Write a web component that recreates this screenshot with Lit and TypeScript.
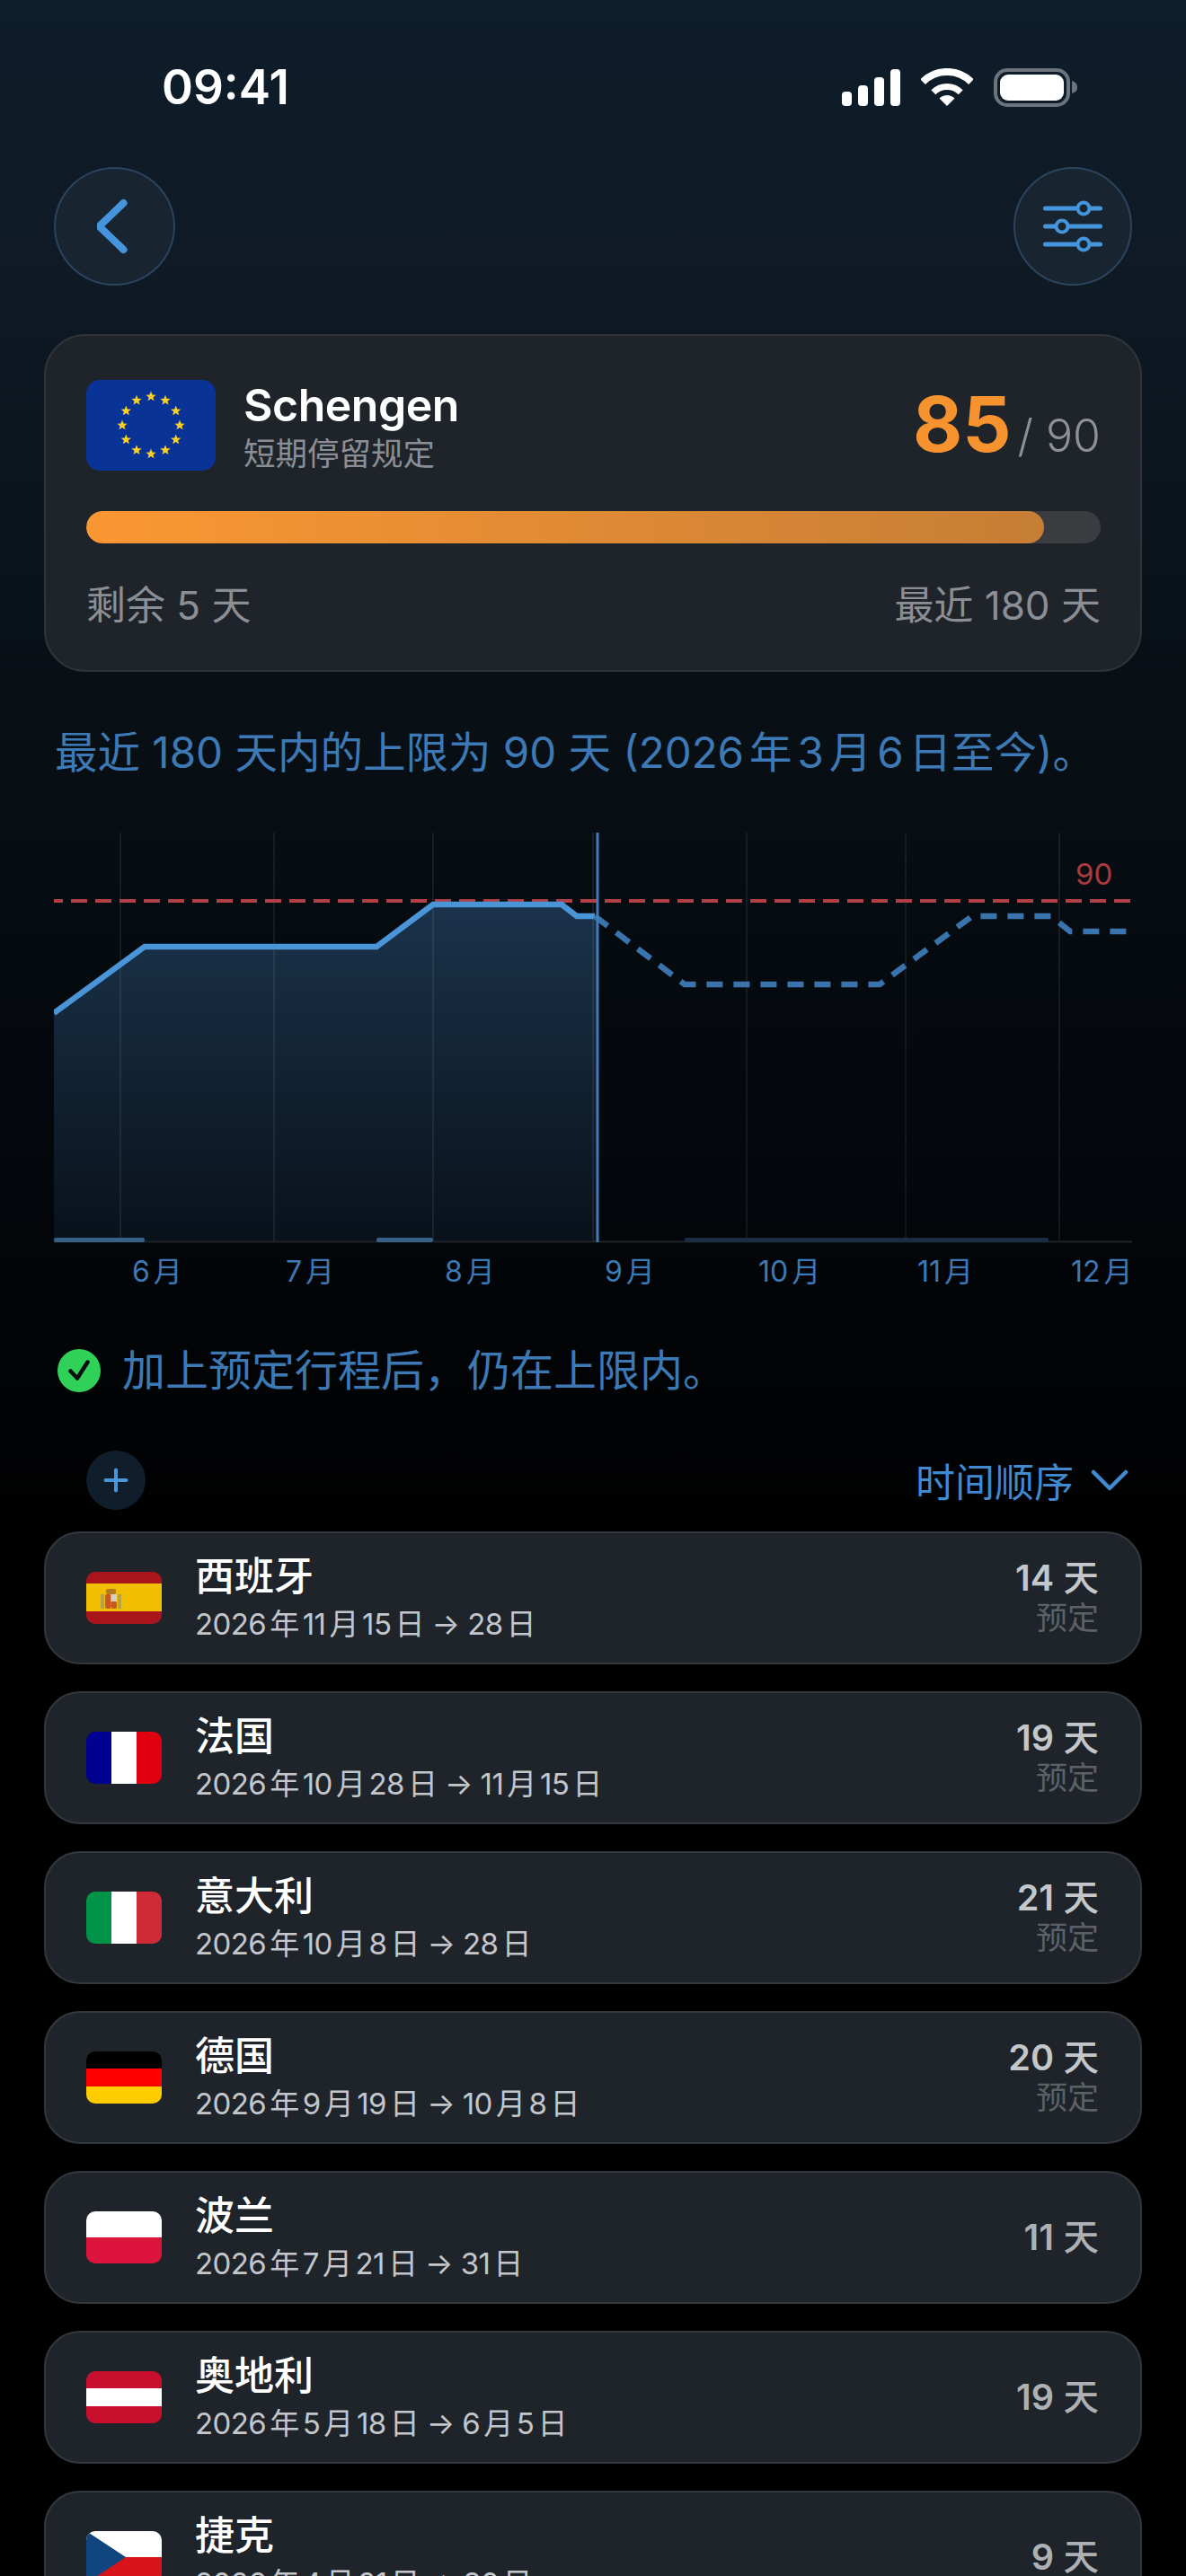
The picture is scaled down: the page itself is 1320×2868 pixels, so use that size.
import { LitElement, html, css, svg } from "lit";
import { customElement } from "lit/decorators.js";

interface Trip { name: string; flag: string; dates: string; days: number; planned: boolean; }

const TRIPS: Trip[] = [
  { name: "西班牙", flag: "es", dates: "2026年11月15日 → 28日", days: 14, planned: true },
  { name: "法国", flag: "fr", dates: "2026年10月28日 → 11月15日", days: 19, planned: true },
  { name: "意大利", flag: "it", dates: "2026年10月8日 → 28日", days: 21, planned: true },
  { name: "德国", flag: "de", dates: "2026年9月19日 → 10月8日", days: 20, planned: true },
  { name: "波兰", flag: "pl", dates: "2026年7月21日 → 31日", days: 11, planned: false },
  { name: "奥地利", flag: "at", dates: "2026年5月18日 → 6月5日", days: 19, planned: false },
  { name: "捷克", flag: "cz", dates: "2026年4月21日 → 30日", days: 9, planned: false },
];

const MONTHS = ["", "6月", "7月", "8月", "9月", "10月", "11月", "12月"];
const GRID_X = [134, 305, 482, 660, 831, 1008, 1179];

function star(cx: number, cy: number, R: number): string {
  const pts: string[] = [];
  for (let i = 0; i < 10; i++) {
    const r = i % 2 === 0 ? R : R * 0.42;
    const a = (-90 + i * 36) * (Math.PI / 180);
    pts.push(`${(cx + r * Math.cos(a)).toFixed(2)},${(cy + r * Math.sin(a)).toFixed(2)}`);
  }
  return pts.join(" ");
}

function flag(code: string) {
  const body: Record<string, unknown> = {
    es: svg`<rect width="84" height="58" fill="#aa151b"/><rect y="13" width="84" height="31" fill="#f1bf00"/>
      <rect x="16" y="25" width="4" height="16" fill="#b9a04a"/><rect x="35" y="25" width="4" height="16" fill="#b9a04a"/>
      <rect x="21" y="25" width="6.5" height="16" rx="2" fill="#c8581f"/><rect x="27.5" y="25" width="6.5" height="8" fill="#d9cfc0"/>
      <rect x="27.5" y="33" width="6.5" height="8" rx="2" fill="#c8581f"/><rect x="22" y="19" width="11" height="6" rx="2" fill="#b5791f"/>`,
    fr: svg`<rect width="28" height="58" fill="#000091"/><rect x="28" width="28" height="58" fill="#fff"/><rect x="56" width="28" height="58" fill="#e1000f"/>`,
    it: svg`<rect width="28" height="58" fill="#009246"/><rect x="28" width="28" height="58" fill="#fff"/><rect x="56" width="28" height="58" fill="#ce2b37"/>`,
    de: svg`<rect width="84" height="19" fill="#000"/><rect y="19" width="84" height="20" fill="#f00"/><rect y="39" width="84" height="19" fill="#fc0"/>`,
    pl: svg`<rect width="84" height="29" fill="#fff"/><rect y="29" width="84" height="29" fill="#dc143c"/>`,
    at: svg`<rect width="84" height="19" fill="#c8102e"/><rect y="19" width="84" height="20" fill="#fff"/><rect y="39" width="84" height="19" fill="#c8102e"/>`,
    cz: svg`<rect width="84" height="29" fill="#fff"/><rect y="29" width="84" height="29" fill="#d7141a"/><path d="M0 0L44 29L0 58Z" fill="#11457e"/>`,
  };
  return html`<svg class="flag" viewBox="0 0 84 58" aria-hidden="true">${body[code]}</svg>`;
}

@customElement("app-root")
export class AppRoot extends LitElement {
  static styles = css`
    :host {
      display: block;
      width: 1320px;
      height: 2868px;
      overflow: hidden;
      color: #fff;
      font-family: Inter, "Noto Sans CJK SC", sans-serif;
      text-autospace: normal;
      background: linear-gradient(180deg, #0e1d2a 0px, #0f1a25 300px, #080f15 800px, #03060a 1350px, #000 1750px);
    }
    svg { display: block; }
    .status {
      height: 72px;
      padding: 61px 121px 0 180px;
      display: flex;
      justify-content: space-between;
      align-items: center;
    }
    .time { font-size: 53px; font-weight: 600; line-height: 72px; }
    .status-icons { display: flex; align-items: center; gap: 23px; }
    .nav {
      margin-top: 53px;
      padding: 0 60px;
      display: flex;
      justify-content: space-between;
    }
    .round {
      width: 132px;
      height: 132px;
      box-sizing: border-box;
      border-radius: 50%;
      background: #182430;
      border: 2px solid #2b445e;
      display: flex;
      align-items: center;
      justify-content: center;
    }
    .round.back { width: 135px; }
    .card {
      margin: 54px 49px 0 49px;
      height: 376px;
      box-sizing: border-box;
      padding: 49px 44px 0 45px;
      background: #1f242b;
      border: 2px solid #2f3439;
      border-radius: 46px;
    }
    .head { display: flex; align-items: flex-start; height: 101px; }
    .eu { width: 144px; height: 101px; border-radius: 15px; overflow: hidden; flex: none; }
    .titles { margin-left: 31px; flex: 1; }
    .title { font-size: 50px; font-weight: 600; line-height: 56px; letter-spacing: -0.5px; }
    .sub { font-size: 35.5px; line-height: 44px; color: #8b8e94; margin-top: 5px; }
    .count { display: flex; align-items: baseline; margin-top: 6px; }
    .count b { font-size: 85px; font-weight: 700; line-height: 88px; color: #f7932f; }
    .count span { font-size: 50px; font-weight: 300; color: #8e9198; margin-left: 7px; }
    .track { margin-top: 45px; height: 36px; border-radius: 18px; background: #3a3c40; overflow: hidden; }
    .fill { height: 36px; border-radius: 18px; background: linear-gradient(90deg, #fb9733, #c67e35); }
    .labels {
      margin-top: 44px;
      display: flex;
      justify-content: space-between;
      font-size: 44px;
      line-height: 50px;
      color: #8b8e94;
    }
    .note { margin: 60px 0 0 61px; font-size: 47.5px; line-height: 60px; color: #3d7ab5; white-space: nowrap; }
    .chart { margin: 59px 0 0 60px; width: 1200px; height: 460px; }
    .chart .limit { font-size: 33px; fill: #a83a40; font-family: Inter, sans-serif; }
    .months {
      margin-left: 60px;
      width: 1200px;
      display: grid;
      grid-template-columns: 74px 171px 177px 178px 171px 177px 171px 81px;
      margin-top: 7px;
      font-size: 32px;
      line-height: 44px;
      color: #3d7ab5;
    }
    .months span { padding-left: 13px; white-space: nowrap; }
    .ok { margin: 58px 0 0 64px; display: flex; align-items: center; gap: 24px; height: 60px; }
    .ok-text { font-size: 48px; line-height: 60px; color: #3d7ab5; }
    .tools {
      margin-top: 59px;
      padding: 0 64px 0 96px;
      height: 66px;
      display: flex;
      justify-content: space-between;
      align-items: center;
    }
    .plus { width: 66px; height: 66px; border-radius: 50%; background: #101e2c; display: flex; align-items: center; justify-content: center; }
    .sort { display: flex; align-items: center; gap: 19px; font-size: 44px; color: #3f8ad0; }
    .rows { margin: 24px 49px 0 49px; display: flex; flex-direction: column; gap: 30px; }
    .row {
      height: 148px;
      box-sizing: border-box;
      padding: 0 46px 0 45px;
      background: #1f242b;
      border: 2px solid #33383e;
      border-radius: 40px;
      display: flex;
      align-items: center;
      flex: none;
    }
    .flag-wrap { width: 84px; height: 58px; border-radius: 10px; overflow: hidden; flex: none; }
    .flag { width: 84px; height: 58px; }
    .row-main { margin-left: 37px; flex: 1; }
    .name { font-size: 44px; font-weight: 500; line-height: 52px; margin-bottom: 6px; }
    .dates { font-size: 33px; line-height: 42px; color: #c3c6ca; white-space: nowrap; letter-spacing: -0.6px; }
    .row-side { text-align: right; }
    .days { font-size: 39.5px; font-weight: 500; line-height: 44px; color: #aeb1b4; }
    .days b { font-weight: 600; }
    .days.on { color: #c4c7ca; }
    .planned { font-size: 35px; line-height: 44px; color: #5d6167; }
  `;

  render() {
    return html`
      <div class="status">
        <div class="time">09:41</div>
        <div class="status-icons">
          <svg width="65" height="41" viewBox="0 0 65 41" fill="#fff" aria-hidden="true">
            <rect x="0" y="25" width="11" height="16" rx="4"/><rect x="18" y="18" width="11" height="23" rx="4"/>
            <rect x="36" y="9" width="11" height="32" rx="4"/><rect x="54" y="0" width="11" height="41" rx="4"/>
          </svg>
          <svg width="58" height="43" viewBox="0 0 58 43" fill="none" stroke="#fff" aria-hidden="true">
            <path d="M2.1 15.1A38 38 0 0 1 55.9 15.1" stroke-width="8"/>
            <path d="M13.8 26.8A21.5 21.5 0 0 1 44.2 26.8" stroke-width="7"/>
            <path d="M29 42L20.5 33.5A12 12 0 0 1 37.5 33.5Z" fill="#fff" stroke="none"/>
          </svg>
          <svg width="93" height="43" viewBox="0 0 93 43" aria-hidden="true">
            <rect x="2" y="2" width="81" height="39" rx="13" fill="none" stroke="#6b747d" stroke-width="4"/>
            <rect x="7" y="7" width="71" height="29" rx="9" fill="#fff"/>
            <path d="M87 14C91 15 93 18 93 21.5C93 25 91 27 87 28Z" fill="#6b747d"/>
          </svg>
        </div>
      </div>

      <div class="nav">
        <div class="round back">
          <svg width="40" height="64" viewBox="0 0 40 64" fill="none" stroke="#4495dc" stroke-width="8" stroke-linecap="round" stroke-linejoin="round" aria-hidden="true">
            <path d="M29.5 6L2.5 32L29.5 58"/>
          </svg>
        </div>
        <div class="round">
          <svg width="66" height="58" viewBox="0 0 66 58" fill="none" stroke="#4495dc" aria-hidden="true">
            <path d="M2.500 9H63.500M2.500 29H63.500M2.500 49H63.500" stroke-width="5" stroke-linecap="round"/>
            <circle cx="45" cy="9" r="6.500" fill="#182430" stroke-width="4"/>
            <circle cx="21" cy="29" r="6.500" fill="#182430" stroke-width="4"/>
            <circle cx="45" cy="49" r="6.500" fill="#182430" stroke-width="4"/>
          </svg>
        </div>
      </div>

      <section class="card">
        <div class="head">
          <div class="eu">
            <svg width="144" height="101" viewBox="0 0 144 101" aria-hidden="true">
              <rect width="144" height="101" fill="#0a3398"/>
              ${Array.from({ length: 12 }, (_, i) => {
                const a = (i * 30 - 90) * (Math.PI / 180);
                return svg`<polygon points=${star(72 + 32 * Math.cos(a), 50.5 + 32 * Math.sin(a), 6)} fill="#ffd21f"/>`;
              })}
            </svg>
          </div>
          <div class="titles">
            <div class="title">Schengen</div>
            <div class="sub">短期停留规定</div>
          </div>
          <div class="count"><b>85</b><span>/ 90</span></div>
        </div>
        <div class="track"><div class="fill" style="width: ${(85 / 90 * 100).toFixed(2)}%"></div></div>
        <div class="labels"><span>剩余 5 天</span><span>最近 180 天</span></div>
      </section>

      <div class="note">最近 180 天内的上限为 90 天 (2026年3月6日至今)。</div>

      <svg class="chart" viewBox="60 927 1200 460">
        <defs>
          <linearGradient id="area" gradientUnits="userSpaceOnUse" x1="0" y1="1007" x2="0" y2="1383">
            <stop offset="0" stop-color="#1a334b"/><stop offset="1" stop-color="#09111a"/>
          </linearGradient>
        </defs>
        <polygon points="60,1128 161,1054 419,1054 482,1007 625,1007 642,1020 665,1020 665,1383 60,1383" fill="url(#area)"/>
        ${GRID_X.map((x) => svg`<line x1=${x} x2=${x} y1="927" y2="1383" stroke="#fff" stroke-opacity="0.14" stroke-width="1"/>`)}
        <line x1="60" x2="1260" y1="1382.500" y2="1382.500" stroke="#1f2327" stroke-width="2"/>
        <rect x="60" y="1378" width="101" height="5" rx="2" fill="#38618a"/>
        <rect x="419" y="1378" width="63" height="5" rx="2" fill="#38618a"/>
        <rect x="762" y="1378" width="405" height="5" rx="2" fill="#1a2d42"/>
        <line x1="60" x2="1260" y1="1003" y2="1003" stroke="#b13f46" stroke-width="4" stroke-dasharray="18 9" stroke-dashoffset="8"/>
        <polyline points="60,1128 161,1054 419,1054 482,1007 625,1007 642,1020 662,1020" fill="none" stroke="#4a94d8" stroke-width="6.500"/>
        <polyline points="662,1020 762,1096 979,1096 1082,1020 1170,1020 1191,1037 1260,1037" fill="none" stroke="#3a74ad" stroke-width="6.500" stroke-dasharray="18 12"/>
        <line x1="665" x2="665" y1="927" y2="1383" stroke="#3f7dba" stroke-width="3"/>
        <text class="limit" x="1197" y="985">90</text>
      </svg>

      <div class="months">${MONTHS.map((m) => html`<span>${m}</span>`)}</div>

      <div class="ok">
        <svg width="48" height="48" viewBox="0 0 48 48" aria-hidden="true">
          <circle cx="24" cy="24" r="24" fill="#30d158"/>
          <path d="M14.500 24.500L22 32.500L33.500 14.500" fill="none" stroke="#0a0d10" stroke-width="4.500" stroke-linecap="round" stroke-linejoin="round"/>
        </svg>
        <div class="ok-text">加上预定行程后，仍在上限内。</div>
      </div>

      <div class="tools">
        <div class="plus">
          <svg width="28" height="28" viewBox="0 0 28 28" fill="none" stroke="#4a94d8" stroke-width="4" stroke-linecap="round" aria-hidden="true">
            <path d="M14 2.500V25.500M2.500 14H25.500"/>
          </svg>
        </div>
        <div class="sort">
          <span>时间顺序</span>
          <svg width="42" height="24" viewBox="0 0 42 24" fill="none" stroke="#3f8ad0" stroke-width="4.500" stroke-linecap="round" stroke-linejoin="round" aria-hidden="true">
            <path d="M3 3L21 21L39 3"/>
          </svg>
        </div>
      </div>

      <div class="rows">
        ${TRIPS.map((t) => html`
          <div class="row">
            <div class="flag-wrap">${flag(t.flag)}</div>
            <div class="row-main">
              <div class="name">${t.name}</div>
              <div class="dates">${t.dates}</div>
            </div>
            <div class="row-side">
              <div class="days ${t.planned ? "on" : ""}"><b>${t.days}</b> 天</div>
              ${t.planned ? html`<div class="planned">预定</div>` : ""}
            </div>
          </div>
        `)}
      </div>
    `;
  }
}
